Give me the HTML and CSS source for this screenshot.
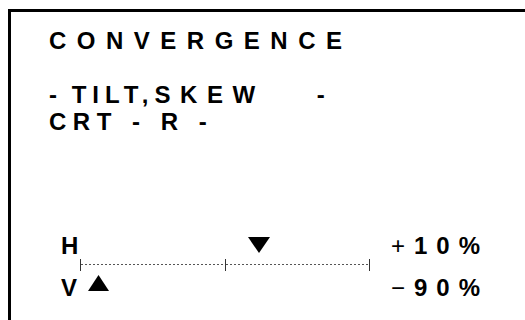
FILE: index.html
```html
<!DOCTYPE html>
<html>
<head>
<meta charset="utf-8">
<link rel="stylesheet" href="styles.css">
</head>
<body>
<div class="screen">
  <div class="title">CONVERGENCE</div>
  <div class="line">&nbsp;</div>
  <div class="line"><span class="narrow">- TILT,</span><span class="wide">SKEW<span class="gap"> </span>-</span></div>
  <div class="line crt">CRT - R -</div>
  <div class="meter">
    <div class="row">
      <div class="label">H</div>
      <div class="track">
        <svg class="marker down" style="left:168px" width="22" height="16" viewBox="0 0 22 16"><polygon points="0,0 22,0 11,16" fill="#000"/></svg>
      </div>
      <div class="value"><span class="sign">+</span>10%</div>
    </div>
    <div class="row ruler-row">
      <div class="label"></div>
      <div class="ruler">
        <span class="tick"></span>
        <span class="dots"></span>
        <span class="tick"></span>
        <span class="dots"></span>
        <span class="tick"></span>
      </div>
    </div>
    <div class="row">
      <div class="label">V</div>
      <div class="track">
        <svg class="marker up" style="left:8px" width="21" height="16" viewBox="0 0 21 16"><polygon points="10.5,0 21,16 0,16" fill="#000"/></svg>
      </div>
      <div class="value"><span class="sign">−</span>90%</div>
    </div>
  </div>
</div>
</body>
</html>
```

FILE: styles.css
```css
html, body {
  margin: 0;
  padding: 0;
  background: #fff;
  overflow: hidden;
}
body {
  padding: 9px 0 0 8px;
  height: 320px;
  box-sizing: border-box;
}
.screen {
  height: 100%;
  border-left: 3px solid #000;
  border-top: 3px solid #000;
  box-sizing: border-box;
  padding: 15px 0 0 38px;
  font-family: "Liberation Sans", Arial, sans-serif;
  font-weight: bold;
  font-size: 24px;
  line-height: 27px;
  color: #000;
}
.title {
  letter-spacing: 10.5px;
  white-space: pre;
}
.line {
  white-space: pre;
  letter-spacing: 6px;
}
.narrow {
  letter-spacing: 6px;
  word-spacing: -4px;
}
.wide {
  letter-spacing: 9.5px;
}
.gap {
  word-spacing: 36px;
}
.crt {
  letter-spacing: 6.5px;
  word-spacing: 1px;
}
.meter {
  margin-top: 97px;
  margin-left: 12px;
  display: flex;
  flex-direction: column;
}
.row {
  display: flex;
  height: 27px;
  align-items: center;
}
.label {
  width: 19px;
}
.track {
  position: relative;
  width: 289px;
  height: 27px;
}
.marker {
  position: absolute;
}
.marker.down { top: 5px; }
.marker.up { top: 1px; }
.value {
  margin-left: 22px;
  letter-spacing: 9px;
}
.sign {
  font-weight: normal;
}
.ruler-row {
  height: 15px;
  align-items: flex-start;
}
.ruler {
  width: 290px;
  height: 13px;
  margin-top: -1px;
  display: flex;
  align-items: center;
}
.tick {
  width: 1px;
  height: 12px;
  background: #333;
}
.dots {
  flex: 1;
  height: 1px;
  background: repeating-linear-gradient(90deg, #555 0 2px, transparent 2px 4px);
}
```
